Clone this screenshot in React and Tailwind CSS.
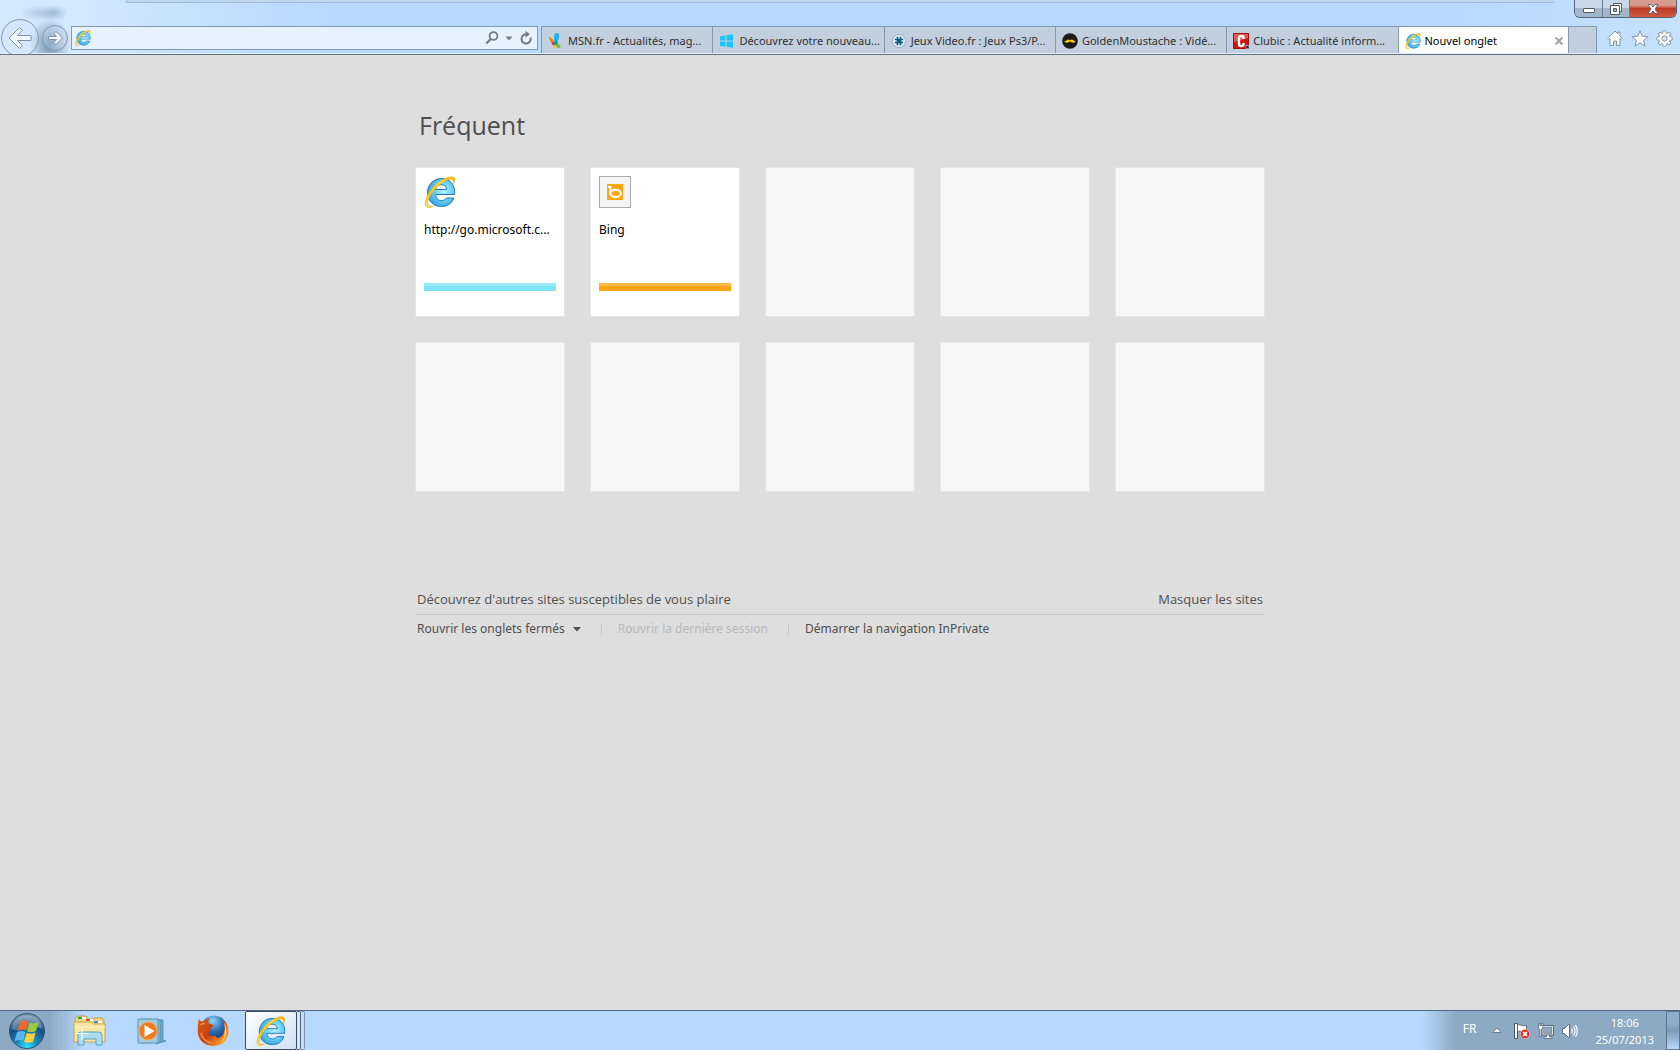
import { useState } from 'react';

const TABS = [
  { title: 'MSN.fr - Actualités, mag...', icon: MsnIcon },
  { title: 'Découvrez votre nouveau...', icon: WindowsIcon },
  { title: 'Jeux Video.fr : Jeux Ps3/P...', icon: JeuxIcon },
  { title: 'GoldenMoustache : Vidé...', icon: MoustacheIcon },
  { title: 'Clubic : Actualité inform...', icon: ClubicIcon },
];

const SITES = [
  { title: 'http://go.microsoft.c...', icon: <IeIcon className="size-8" />, bar: 'border-[#9aebf8] bg-[#7fe5f6]' },
  { title: 'Bing', icon: <BingIcon />, bar: 'border-[#ffb844] bg-[#ffa615]' },
];

function IeIcon({ className }) {
  return (
    <svg viewBox="0 0 32 32" className={className} aria-hidden="true">
      <defs>
        <radialGradient id="ieBlue" cx="0.6" cy="0.45" r="0.6">
          <stop offset="0" stopColor="#b4f3ff" />
          <stop offset="0.55" stopColor="#68d0f5" />
          <stop offset="1" stopColor="#3ba3dc" />
        </radialGradient>
        <linearGradient id="ieGold" x1="0" y1="1" x2="1" y2="0">
          <stop offset="0" stopColor="#ffe9a0" />
          <stop offset="0.3" stopColor="#fbc600" />
          <stop offset="0.7" stopColor="#ffdc3e" />
          <stop offset="1" stopColor="#f2ab00" />
        </linearGradient>
      </defs>
      <path
        fillRule="evenodd"
        d="M30.500 18.500H11.500C12 22.500 14 24.500 17.500 24.500c2.400 0 4.100-1 5-2.500h7.300C27.800 27.500 23.500 30.500 17.300 30.500 9.500 30.500 3.500 24.700 3.500 16.700S9.500 2.500 17.300 2.500c8 0 13.400 5.600 13.400 14zM11.500 13.500h11.300C22.300 10.300 20.300 8.700 17.200 8.700s-5.200 1.600-5.700 4.800z"
        fill="url(#ieBlue)"
        stroke="#2478b8"
        strokeWidth="1"
      />
      <path
        d="M8.500 30.300C5.500 32 2.600 31.800 1.600 29.800 -.2 25.500 4.400 15.500 11.800 8.700 18.500 2.500 27-.6 29.800 1.600c1.300 1.200 1 3.600-.2 6 0-2.200-.2-3.500-1-4C26 2 20 4.600 13.800 10 7 16.200 2.600 24.500 3.600 28.300c.4 1.700 2.400 2.200 4.900 2z"
        fill="url(#ieGold)"
        stroke="#f0b91c"
        strokeWidth="0.900"
      />
    </svg>
  );
}

function BingIcon() {
  return (
    <svg viewBox="0 0 32 32" className="size-8" aria-hidden="true">
      <rect x="0.5" y="0.5" width="31" height="31" fill="#f4f4f4" stroke="#a9a9a9" />
      <rect x="8" y="8" width="16" height="16" fill="#ffa615" />
      <path d="M9 11h2.500v6" fill="none" stroke="#fff" strokeWidth="1.800" />
      <ellipse cx="16.500" cy="17.300" rx="5.300" ry="3.600" fill="none" stroke="#fff" strokeWidth="2" />
    </svg>
  );
}

function MsnIcon() {
  return (
    <svg viewBox="0 0 16 16" className="size-4 shrink-0" aria-hidden="true">
      <path d="M6 4.500C6 2 7 0 9 0s2.500 2 2 4.500C10.700 7 9.500 9 8 9S6 7 6 4.500z" fill="#1cb4ec" />
      <path d="M1 4c1.500-.5 4 2 6 6L6 12C3.500 11 1 7 1 4z" fill="#f58220" />
      <path d="M3.500 8.500L7 11l-1 1.500c-1.500-.5-2.500-2-2.500-4z" fill="#d7232e" />
      <path d="M6 12c-.8 1.500-.5 2.500.5 3 1-.5 1.500-2 1-3.500z" fill="#fbb040" />
      <path d="M8 10c2 0 4 1.500 4.500 3.500.2 1.500-1 2-2.500 1.500C8 14.500 7 12 8 10z" fill="#72bf44" />
      <circle cx="7.700" cy="9.700" r="2" fill="#089c93" />
    </svg>
  );
}

function WindowsIcon() {
  return (
    <svg viewBox="0 0 16 16" className="size-4 shrink-0" fill="#1ec5fb" aria-hidden="true">
      <path d="M1 3.200L6.500 2.400v5.100H1zM7.500 2.300L14 1.300v6.200H7.500zM1 8.500h5.500v5.200L1 12.900zM7.500 8.500H14v6.200l-6.500-1z" />
    </svg>
  );
}

function JeuxIcon() {
  return (
    <svg viewBox="0 0 16 16" className="size-4 shrink-0" aria-hidden="true">
      <circle cx="8" cy="8" r="6.500" fill="#e4f2f7" stroke="#8db5c8" />
      <path d="M6.500 3.800v8.400M9.500 3.800v8.400M3.800 6.500h8.400M3.800 9.500h8.400" stroke="#0d5f7c" strokeWidth="1.700" />
      <path d="M6.500 6.500h3v3h-3z" fill="#0d5f7c" />
    </svg>
  );
}

function MoustacheIcon() {
  return (
    <svg viewBox="0 0 16 16" className="size-4 shrink-0" aria-hidden="true">
      <circle cx="8" cy="8" r="7.800" fill="#1e1c1b" />
      <path d="M8 7.200c1-1 2.500-1 3.400 0 .6.700 1.300 1.200 2.400 1-1 1.800-4 2-5.800.4-1.800 1.600-4.800 1.400-5.800-.4 1.100.2 1.800-.3 2.400-1 .9-1 2.400-1 3.400 0z" fill="#fcc80a" />
    </svg>
  );
}

function ClubicIcon() {
  return (
    <svg viewBox="0 0 16 16" className="size-4 shrink-0" aria-hidden="true">
      <rect x="0.500" y="0.500" width="15" height="15" fill="#cf1416" stroke="#a80d10" />
      <path d="M1 1h14v4L1 9z" fill="#e35b55" />
      <path d="M10.500 6V4.500Q10.500 3 8.200 3T6 5v6q0 2 2.200 2t2.300-1.500V10" fill="none" stroke="#fff" strokeWidth="2.400" />
      <rect x="13" y="12.500" width="3" height="3" fill="#222" stroke="#c2cfde" strokeWidth="0.600" />
    </svg>
  );
}

function NavButton({ label, size }) {
  const back = label === 'Précédent';
  return (
    <button type="button" aria-label={label} className="shrink-0">
      <svg viewBox={back ? '0 0 38 38' : '0 0 26 26'} className={size}>
        <circle cx={back ? 19 : 13} cy={back ? 19 : 13} r={back ? 18.4 : 12.4} fill="#d7e8fb" fillOpacity="0.3" stroke="#8496ac" />
        <path
          d={back
            ? 'M8 19L18.500 8.500l3 3-5 5H30v5H16.500l5 5-3 3z'
            : 'M20.500 13L14 6.500l-2 2 2.500 3H6.500v3h8l-2.500 3 2 2z'}
          fill="#f0f7ff"
          stroke="#8292a6"
          strokeLinejoin="round"
        />
      </svg>
    </button>
  );
}

function AddressBar() {
  const [url, setUrl] = useState('');
  return (
    <form className="flex h-6 min-w-0 flex-[459_1_0%] items-center border border-[#8399b1] bg-[#e6f2fe] pr-1 pl-[3px]">
      <IeIcon className="size-4 shrink-0" />
      <input
        type="text"
        aria-label="Adresse"
        value={url}
        onChange={(e) => setUrl(e.target.value)}
        className="min-w-0 flex-1 bg-transparent px-2 text-xs outline-none"
      />
      <button type="button" aria-label="Rechercher" className="mr-1">
        <svg viewBox="0 0 14 14" className="size-3.5" fill="none" stroke="#737a81">
          <circle cx="8.500" cy="5" r="3.900" strokeWidth="1.800" />
          <path d="M5.700 8L1.300 12.500" strokeWidth="2.200" />
        </svg>
      </button>
      <button type="button" aria-label="Historique" className="mr-1.5 ml-0.5">
        <svg viewBox="0 0 8 5" className="h-[5px] w-2" fill="#737a81">
          <path d="M0.500 0.500h7L4 4.500z" />
        </svg>
      </button>
      <button type="button" aria-label="Actualiser">
        <svg viewBox="0 0 14 14" className="size-3.5" fill="none" stroke="#737a81" strokeWidth="2">
          <path d="M11.500 6.500A4.600 4.600 0 1 1 7.500 3.300" />
          <path d="M6.500 0v6.500l4.500-3.200z" fill="#737a81" stroke="none" />
        </svg>
      </button>
    </form>
  );
}

function WindowControls() {
  return (
    <div className="mr-[3px] flex h-[18px] w-[103px] overflow-hidden rounded-b-md border border-t-0 border-[#55647a]">
      <button type="button" aria-label="Réduire" className="flex w-7 items-center justify-center border-r border-[#6c7f96] bg-linear-to-b from-[#c9d8e8] from-45% to-[#a2b6cc] to-50%">
        <svg viewBox="0 0 12 10" className="h-2.5 w-3">
          <rect x="0.500" y="4.500" width="11" height="4" rx="0.500" fill="#fff" stroke="#505a68" />
        </svg>
      </button>
      <button type="button" aria-label="Niveau inférieur" className="flex w-[27px] items-center justify-center border-r border-[#6c7f96] bg-linear-to-b from-[#c9d8e8] from-45% to-[#a2b6cc] to-50%">
        <svg viewBox="0 0 12 12" className="size-3" fill="#fff" stroke="#505a68">
          <path d="M3.500 0.500h8v8h-8z" />
          <path d="M0.500 2.500h9v9h-9z" />
          <path d="M3.500 5.500h3v3h-3z" fill="#a2b6cc" />
        </svg>
      </button>
      <button type="button" aria-label="Fermer" className="flex flex-1 items-center justify-center bg-linear-to-b from-[#d99b8e] from-30% via-[#bf3a24] via-50% to-[#cf5a42]">
        <svg viewBox="0 0 12 12" className="size-3">
          <path d="M1 1.500h3l2 2.500 2-2.500h3L8 6l3 4.500H8L6 8l-2 2.500H1L4 6z" fill="#fff" stroke="#5b5260" strokeWidth="0.800" />
        </svg>
      </button>
    </div>
  );
}

function ToolIcons() {
  return (
    <div className="flex h-6 w-[83px] shrink-0 items-center justify-between pr-[7px] pl-2.5">
      <button type="button" aria-label="Accueil">
        <svg viewBox="0 0 16 16" className="size-4" fill="#fff" stroke="#8293a8">
          <path d="M8 1L0.700 8.500l1 1L3 8.500v7h3.500V11h3v4.500H13v-7l1.300 1 1-1L13 6V2h-2v2z" strokeLinejoin="round" />
        </svg>
      </button>
      <button type="button" aria-label="Favoris">
        <svg viewBox="0 0 18 17" className="h-[17px] w-[18px]" fill="#fff" stroke="#8293a8">
          <path d="M9 0.800l2.200 5.400 6 .4-4.600 3.700 1.500 5.700L9 12.900 3.900 16l1.500-5.700L0.800 6.600l6-.4z" strokeLinejoin="round" />
        </svg>
      </button>
      <button type="button" aria-label="Outils">
        <svg viewBox="0 0 18 18" className="size-[17px]" stroke="#8293a8">
          {[0, 45, 90, 135].map((a) => (
            <rect key={a} x="7.200" y="0.800" width="3.600" height="16.400" rx="1" fill="#fff" transform={`rotate(${a} 9 9)`} />
          ))}
          <circle cx="9" cy="9" r="5.500" fill="#fff" stroke="none" />
          <circle cx="9" cy="9" r="2.800" fill="#d0e4fa" />
        </svg>
      </button>
    </div>
  );
}

function BrowserHeader() {
  return (
    <header className="shrink-0 overflow-hidden border-b border-[#5f7388] bg-[#b7d9fd] bg-[radial-gradient(ellipse_14px_8px_at_54px_13px,#8fa9c5aa,transparent),radial-gradient(ellipse_20px_8px_at_40px_13px,#9db6d099,transparent),radial-gradient(ellipse_20px_26px_at_50px_44px,#6f8bab,transparent),linear-gradient(100deg,#d3e7fd,#d3e7fd_5%,#b7d9fd_20%,#b7d9fd_86%,#c8e1fc)]">
      <div className="flex h-[26px] items-start justify-between">
        <div className="ml-[126px] h-[3px] flex-1 border-b border-l border-[#9dbce0] bg-[#bfd6ef]" />
        <div className="w-5" />
        <WindowControls />
      </div>
      <div className="flex h-7 items-start border-b border-[#e3effb]">
        <nav className="flex h-6 w-[71px] shrink-0 items-center gap-[3px] pl-px">
          <NavButton label="Précédent" size="size-[38px]" />
          <NavButton label="Suivant" size="size-[26px]" />
        </nav>
        <AddressBar />
        <div className="ml-[3px] flex h-[27px] min-w-0 flex-[1057_1_0%] border-r border-[#8399b1]">
          {TABS.map(({ title, icon: Icon }) => (
            <button key={title} type="button" className="flex min-w-0 flex-[171_1_0%] items-center gap-1 border-t border-l border-[#8399b1] bg-[#c2cfde] pt-0.5 pl-1.5 text-[11px] whitespace-nowrap text-[#303030]">
              <Icon />
              <span>{title}</span>
            </button>
          ))}
          <div className="flex min-w-0 flex-[165_1_0%] items-center border-t border-l border-[#8399b1] bg-white pt-0.5 pr-[5px] pl-1.5 text-[11px] text-black">
            <button type="button" className="flex flex-1 items-center gap-1 whitespace-nowrap">
              <IeIcon className="size-4 shrink-0" />
              <span>Nouvel onglet</span>
            </button>
            <button type="button" aria-label="Fermer l'onglet">
              <svg viewBox="0 0 8 8" className="size-2" stroke="#a2a2a2" strokeWidth="2">
                <path d="M0.500 0.500l7 7M7.500 0.500l-7 7" />
              </svg>
            </button>
          </div>
          <button type="button" aria-label="Nouvel onglet" className="w-7 shrink-0 border-t border-l border-[#8399b1] bg-[#c2cfde]" />
        </div>
        <ToolIcons />
      </div>
    </header>
  );
}

function SiteTile({ site }) {
  if (!site) return <div className="aspect-square border border-[#e6e6e6] bg-[#f7f7f7]" />;
  return (
    <a href="#site" className="flex aspect-square flex-col border border-[#e6e6e6] bg-white px-2 py-2">
      {site.icon}
      <span className="mt-3 text-xs leading-5 whitespace-nowrap text-black">{site.title}</span>
      <span className={`mt-auto mb-[17px] h-2 border-t-[3px] ${site.bar}`} />
    </a>
  );
}

function NewTabPage() {
  const tiles = Array.from({ length: 10 }, (_, i) => SITES[i]);
  return (
    <main className="flex-1 overflow-hidden bg-[#dedede] text-[#4f4f4f]">
      <div className="mx-auto w-full max-w-[850px]">
        <h1 className="pt-[52px] pl-1 font-['Open_Sans',sans-serif] text-[25px] leading-9">Fréquent</h1>
        <div className="mt-6 grid grid-cols-5 gap-[25px]">
          {tiles.map((site, i) => (
            <SiteTile key={i} site={site} />
          ))}
        </div>
        <div className="mt-[97px] flex justify-between border-b border-[#c8c8c8] px-0.5 pb-[5px] font-['Open_Sans',sans-serif] text-[13px] leading-5">
          <a href="#decouvrir">Découvrez d'autres sites susceptibles de vous plaire</a>
          <a href="#masquer">Masquer les sites</a>
        </div>
        <div className="flex items-center px-0.5 pt-1 text-xs leading-5">
          <button type="button" className="flex items-center gap-2">
            Rouvrir les onglets fermés
            <svg viewBox="0 0 8 5" className="h-[5px] w-2" fill="#4f4f4f">
              <path d="M0 0h8L4 4.500z" />
            </svg>
          </button>
          <span className="mr-4 ml-5 h-3 w-px bg-[#c6c6c6]" />
          <button type="button" disabled className="text-[#b9b9b9]">Rouvrir la dernière session</button>
          <span className="mr-4 ml-5 h-3 w-px bg-[#c6c6c6]" />
          <a href="#inprivate">Démarrer la navigation InPrivate</a>
        </div>
      </div>
    </main>
  );
}

function StartOrb() {
  return (
    <svg viewBox="0 0 38 38" className="size-[38px]" aria-hidden="true">
      <defs>
        <radialGradient id="orb" cx="0.5" cy="0.95" r="0.9">
          <stop offset="0" stopColor="#2fe2ff" />
          <stop offset="0.35" stopColor="#1887b8" />
          <stop offset="0.7" stopColor="#1a4c7c" />
          <stop offset="1" stopColor="#7796b0" />
        </radialGradient>
      </defs>
      <circle cx="19" cy="19" r="17.500" fill="url(#orb)" stroke="#2c5676" />
      <path d="M4 17C5 8 11 3.500 19 3.500S33 8 34 17C25 13 13 21 4 17z" fill="#fff" opacity="0.25" />
      <path d="M12 10c3-2 5.500-2 8.500-.5L18 18.500c-3-1.500-5.500-1.300-8.500.3z" fill="#ee6a2c" />
      <path d="M21.500 10.500c3 1.400 5.700 1.300 9-.5L28 19c-3 1.700-6 1.700-9 .3z" fill="#9acb3c" />
      <path d="M9 20.200c3-1.700 5.500-1.700 8.500-.2L15 29c-3-1.500-5.500-1.500-8.500.3z" fill="#5bb5ee" />
      <path d="M18.700 20.800c3 1.300 5.800 1.300 8.900-.3l-2.500 9c-3 1.600-6 1.600-9 .2z" fill="#fdd03a" />
    </svg>
  );
}

function FolderIcon() {
  return (
    <svg viewBox="0 0 34 32" className="h-8 w-[34px]" aria-hidden="true">
      <path d="M2 4l2-3h9l2 3h4l2-1h8l2 3v20H2z" fill="#efd681" stroke="#bf9d45" />
      <path d="M5 2h4v2H5z" fill="#21a640" />
      <path d="M9 2h4v2H9zM17 4h3v2h-3zM25 6h4v2h-4z" fill="#fff" />
      <path d="M13 4h4v2h-4z" fill="#d9502e" />
      <path d="M21 6h4v2h-4z" fill="#3c8cd2" />
      <path d="M1 7h17l2 2h12v18H1z" fill="#f8e6a2" stroke="#c8a64f" />
      <path d="M2 12h30" stroke="#fff4c8" />
      <path d="M5 30V20q0-3 3-3h18q3 0 3 3v10h-6v-6H11v6z" fill="#a9daee" stroke="#5fa5c6" />
      <path d="M9 12v13M2.500 18.500h13" stroke="#fff" strokeWidth="1.200" />
    </svg>
  );
}

function MediaIcon() {
  return (
    <svg viewBox="0 0 30 28" className="h-7 w-[30px]" aria-hidden="true">
      <path d="M8 2l18 1v20l3 1-10 3z" fill="#6ba7c5" stroke="#4c8cae" strokeWidth="0.800" />
      <path d="M4 2l19 1v22L4 26z" fill="#92c5dd" stroke="#4c8cae" strokeWidth="0.800" />
      <path d="M1 2h20v24H1z" fill="#a3cbe0" stroke="#5a96b6" />
      <circle cx="11" cy="14" r="9" fill="#f47a1f" stroke="#fba75b" />
      <path d="M7.500 8l10 6-10 6z" fill="#fff" />
    </svg>
  );
}

function FirefoxIcon() {
  return (
    <svg viewBox="0 0 32 32" className="size-8" aria-hidden="true">
      <defs>
        <radialGradient id="ffGlobe" cx="0.45" cy="0.2" r="0.8">
          <stop offset="0" stopColor="#8fd4f5" />
          <stop offset="0.5" stopColor="#2d6db5" />
          <stop offset="1" stopColor="#142a66" />
        </radialGradient>
        <linearGradient id="ffFox" x1="0" y1="0" x2="1" y2="0.8">
          <stop offset="0" stopColor="#d9621b" />
          <stop offset="0.5" stopColor="#c93c10" />
          <stop offset="1" stopColor="#f9b233" />
        </linearGradient>
      </defs>
      <circle cx="17" cy="14" r="13.500" fill="url(#ffGlobe)" />
      <path
        d="M2 4c1 2 2.500 2.500 4.500 2.500C8 4.500 10 3.500 12.500 3.500c-1 1.500-1.500 3-1 4.500 1.500 1.500 4 1 5 2.500-.5 1.500-3 2-3 3.500 1 3-2.500 3-2 4.500 1.500 3 5 3 8 2 -2 3.500 4 3 6.500-1C28.500 16 28 9 25 4.500c4 2.500 6.500 7 6.500 12C31.500 25 25 31 16.500 31S1 25 .8 17C.6 12 1 7 2 4z"
        fill="url(#ffFox)"
      />
      <path d="M27 7c4 7 3 16-3 20 3-4 4-7 3.500-10 1-3 .5-6-.5-10z" fill="#ffd45a" />
      <path d="M3 10c1.500-1 3-1.500 5-1.500M4 18c1 5 5 9 11 10" fill="none" stroke="#f18a37" strokeWidth="1.500" />
    </svg>
  );
}

function TrayIcons() {
  return (
    <div className="flex items-center gap-2">
      <button type="button" aria-label="Afficher les icônes cachées" className="mr-1">
        <svg viewBox="0 0 10 7" className="h-[7px] w-2.5">
          <path d="M1 5.500h8L5 1z" fill="#fff" stroke="#5c6f86" strokeWidth="0.800" />
        </svg>
      </button>
      <button type="button" aria-label="Centre de maintenance">
        <svg viewBox="0 0 16 16" className="size-4">
          <path d="M0.500 0.500h3v15h-3z" fill="#fff" stroke="#42536a" />
          <path d="M3.500 2c3-1 4 1.500 9 .5v6c-5 1-6-1-9 0z" fill="#fff" stroke="#42536a" strokeWidth="0.800" />
          <circle cx="11" cy="11" r="4.700" fill="#d9251c" stroke="#fbd4d0" strokeWidth="0.600" />
          <path d="M9 9l4 4M13 9l-4 4" stroke="#fff" strokeWidth="1.800" />
        </svg>
      </button>
      <button type="button" aria-label="Réseau">
        <svg viewBox="0 0 16 16" className="size-4" stroke="#384a60">
          <path d="M4 2.500h11.500v9.500H4z" fill="#fff" strokeWidth="0.800" />
          <path d="M5.500 4h8.500v6.500H5.500z" fill="#8fa3b9" strokeWidth="0.400" />
          <path d="M8.500 12h3v2H14v1.500H6V14h2.500z" fill="#fff" strokeWidth="0.600" />
          <path d="M0.500 0.500h1.300v2h1.700v-2h1.300V5L3.500 6.500V14h-1.500V6.500L0.500 5z" fill="#fff" strokeWidth="0.600" />
        </svg>
      </button>
      <button type="button" aria-label="Volume">
        <svg viewBox="0 0 16 16" className="size-4">
          <path d="M0.500 5.500h2l4-4h1v13h-1l-4-4h-2z" fill="#fff" stroke="#42536a" strokeWidth="0.800" />
          <path d="M9.500 5.500q1.500 2.500 0 5M11.500 3.500q3 4.500 0 9M13.500 2q3.500 6 0 12" fill="none" stroke="#fff" strokeWidth="1.200" />
        </svg>
      </button>
    </div>
  );
}

function Taskbar() {
  return (
    <footer className="flex h-10 shrink-0 items-center border-t border-[#4f6780] bg-[linear-gradient(90deg,#8ea9c4_0,#8ea9c4_50px,#b7d9fd_84px,#b7d9fd_calc(100%-258px),#8ea9c4_calc(100%-225px),#8ea9c4)]">
      <button type="button" aria-label="Démarrer" className="ml-2 shrink-0">
        <StartOrb />
      </button>
      <div className="flex h-full flex-1 items-center">
        <button type="button" aria-label="Explorateur Windows" className="ml-[27px]">
          <FolderIcon />
        </button>
        <button type="button" aria-label="Lecteur Windows Media" className="ml-[30px]">
          <MediaIcon />
        </button>
        <button type="button" aria-label="Firefox" className="ml-[30px]">
          <FirefoxIcon />
        </button>
        <div className="ml-4 flex h-full">
          <button type="button" aria-label="Internet Explorer" className="flex w-[52px] items-center justify-center rounded-xs border border-[#3e4c5e] bg-linear-to-br from-white to-[#cfe0f4]">
            <IeIcon className="size-[30px]" />
          </button>
          <span className="h-full w-1 rounded-r-xs border-y border-r border-[#53657b] bg-[#d5e5f7]" />
          <span className="h-full w-1 rounded-r-xs border-y border-r border-[#7c93ad] bg-[#c5dcf5]" />
        </div>
      </div>
      <span className="mr-4 pb-1 text-xs text-white">FR</span>
      <TrayIcons />
      <time className="ml-[17px] text-center text-[11px] leading-[17px] text-white">
        18:06
        <br />
        25/07/2013
      </time>
      <button type="button" aria-label="Afficher le bureau" className="ml-3 h-full w-3.5 border border-[#5d748d] bg-linear-to-b from-[#92adc9] from-30% via-[#7f9ab7] via-50% to-[#b7d9fd]" />
    </footer>
  );
}

export default function App() {
  return (
    <div className="flex h-screen flex-col overflow-hidden font-['Noto_Sans','Open_Sans',sans-serif]">
      <BrowserHeader />
      <NewTabPage />
      <Taskbar />
    </div>
  );
}
